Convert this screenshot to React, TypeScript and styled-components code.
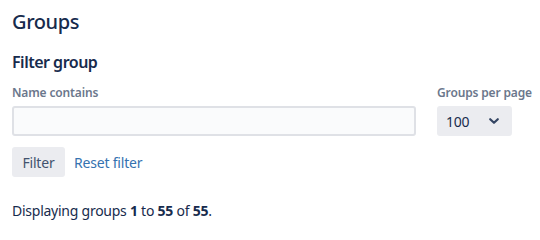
import React from "react";
import styled, { createGlobalStyle } from "styled-components";

const Global = createGlobalStyle`
  html, body { margin: 0; padding: 0; background: #fff; }
  body { font-family: "Noto Sans", "Open Sans", sans-serif; color: #172b4d; }
  * { box-sizing: border-box; }
`;

const Page = styled.div`
  padding: 10px 12px 0 12px;
  width: 540px;
`;

const Title = styled.h1`
  margin: 0;
  font-size: 20px;
  line-height: 24px;
  font-weight: 500;
  letter-spacing: -0.4px;
  color: #172b4d;
`;

const SubTitle = styled.h2`
  margin: 18px 0 0 0;
  font-size: 16px;
  line-height: 20px;
  font-weight: 600;
  letter-spacing: -0.5px;
  color: #172b4d;
`;

const FormRow = styled.div`
  display: grid;
  grid-template-columns: 404px 75px;
  column-gap: 21px;
  margin-top: 13px;
`;

const Field = styled.div`
  display: flex;
  flex-direction: column;
`;

const Label = styled.label`
  font-size: 12px;
  line-height: 16px;
  font-weight: 600;
  letter-spacing: -0.15px;
  color: #6b778c;
  margin-bottom: 5px;
  white-space: nowrap;
`;

const TextInput = styled.input`
  height: 30px;
  width: 100%;
  border: 2px solid #dfe1e6;
  border-radius: 3px;
  background: #fafbfc;
  font: inherit;
  font-size: 14px;
  padding: 0 6px;
  outline: none;
`;

const SelectBox = styled.div`
  height: 30px;
  background: #ebecf0;
  border-radius: 3px;
  display: flex;
  align-items: center;
  justify-content: space-between;
  padding: 0 12px 0 9px;
  font-size: 14px;
  letter-spacing: -0.2px;
  color: #172b4d;
`;

const Actions = styled.div`
  display: flex;
  align-items: center;
  gap: 9px;
  margin-top: 11px;
`;

const Button = styled.button`
  height: 30px;
  width: 53px;
  padding: 0;
  border: none;
  border-radius: 3px;
  background: #ebecf0;
  color: #42526e;
  font: inherit;
  font-size: 14px;
  letter-spacing: -0.2px;
`;

const LinkButton = styled.a`
  font-size: 14px;
  letter-spacing: -0.2px;
  text-decoration: none;
  color: #3572b0;
`;

const Summary = styled.p`
  margin: 24px 0 0 0;
  font-size: 14px;
  line-height: 20px;
  letter-spacing: -0.25px;
  color: #172b4d;
  b { font-weight: 700; }
`;

const Chevron = () => (
  <svg width="12" height="12" viewBox="0 0 12 12" aria-hidden>
    <path d="M2.2 4.2 L6 7.8 L9.8 4.2" fill="none" stroke="#344563" strokeWidth="2.2" strokeLinecap="round" strokeLinejoin="round" />
  </svg>
);

export default function App() {
  return (
    <Page>
      <Global />
      <Title>Groups</Title>
      <SubTitle>Filter group</SubTitle>
      <FormRow>
        <Field>
          <Label>Name contains</Label>
          <TextInput />
        </Field>
        <Field>
          <Label>Groups per page</Label>
          <SelectBox>
            <span>100</span>
            <Chevron />
          </SelectBox>
        </Field>
      </FormRow>
      <Actions>
        <Button>Filter</Button>
        <LinkButton href="#">Reset filter</LinkButton>
      </Actions>
      <Summary>
        Displaying groups <b>1</b> to <b>55</b> of <b>55</b>.
      </Summary>
    </Page>
  );
}
